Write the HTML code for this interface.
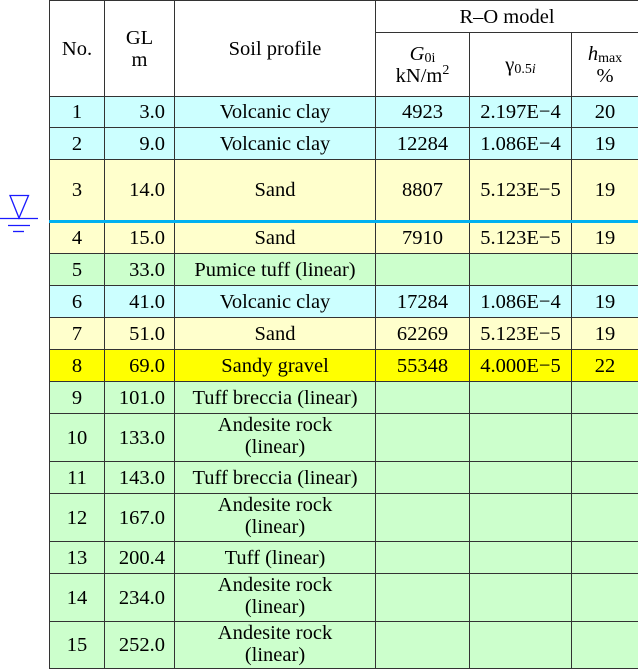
<!DOCTYPE html>
<html><head><meta charset="utf-8"><style>
html,body{margin:0;padding:0;background:#fff;width:638px;height:669px;overflow:hidden}
table{position:absolute;left:49px;top:0;border-collapse:collapse;table-layout:fixed;width:589px;font-family:"Liberation Serif","DejaVu Serif",serif;font-size:20.5px;color:#000}
td{border:1px solid #333;padding:0;text-align:center;vertical-align:middle;line-height:22px;overflow:hidden;white-space:nowrap}
.c{background:#ccffff}.y{background:#ffffcc}.g{background:#ccffcc}.Y{background:#ffff00}
.r{text-align:right;padding-right:9px}
.b td{border-bottom:3px solid #00b0f0}
.t{vertical-align:top;padding-top:0;line-height:22px}
.s{font-size:14px;line-height:0;position:relative;top:2px}
.p{font-size:14px;line-height:0;position:relative;top:-8px}
</style></head><body>
<svg width="45" height="240" style="position:absolute;left:0;top:0" viewBox="0 0 45 240">
<g stroke="#1a1aff" stroke-width="1.3" fill="none">
<path d="M10 195.5 H28.5 L19 218 Z"/>
<path d="M0 218.5 H38"/>
<path d="M8 225.5 H30"/>
<path d="M13 231.5 H24"/>
</g></svg>
<table>
<colgroup><col style="width:55px"><col style="width:70px"><col style="width:201px"><col style="width:94px"><col style="width:102px"><col style="width:67px"></colgroup>
<tr style="height:32px"><td rowspan="2">No.</td><td rowspan="2">GL<br>m</td><td rowspan="2">Soil profile</td><td colspan="3">R–O model</td></tr>
<tr style="height:64px"><td><i>G</i><span class="s">0i</span><br>kN/m<span class="p">2</span></td><td>γ<span class="s">0.5<i>i</i></span></td><td><i>h</i><span class="s">max</span><br>%</td></tr>
<tr class="c" style="height:31px"><td>1</td><td class="r">3.0</td><td>Volcanic clay</td><td>4923</td><td>2.197E−4</td><td>20</td></tr>
<tr class="c" style="height:32px"><td>2</td><td class="r">9.0</td><td>Volcanic clay</td><td>12284</td><td>1.086E−4</td><td>19</td></tr>
<tr class="y b" style="height:62px"><td>3</td><td class="r">14.0</td><td>Sand</td><td>8807</td><td>5.123E−5</td><td>19</td></tr>
<tr class="y" style="height:32px"><td>4</td><td class="r">15.0</td><td>Sand</td><td>7910</td><td>5.123E−5</td><td>19</td></tr>
<tr class="g" style="height:32px"><td>5</td><td class="r">33.0</td><td>Pumice tuff (linear)</td><td></td><td></td><td></td></tr>
<tr class="c" style="height:32px"><td>6</td><td class="r">41.0</td><td>Volcanic clay</td><td>17284</td><td>1.086E−4</td><td>19</td></tr>
<tr class="y" style="height:32px"><td>7</td><td class="r">51.0</td><td>Sand</td><td>62269</td><td>5.123E−5</td><td>19</td></tr>
<tr class="Y" style="height:32px"><td>8</td><td class="r">69.0</td><td>Sandy gravel</td><td>55348</td><td>4.000E−5</td><td>22</td></tr>
<tr class="g" style="height:32px"><td>9</td><td class="r">101.0</td><td>Tuff breccia (linear)</td><td></td><td></td><td></td></tr>
<tr class="g" style="height:48px"><td>10</td><td class="r">133.0</td><td class="t">Andesite rock<br>(linear)</td><td></td><td></td><td></td></tr>
<tr class="g" style="height:32px"><td>11</td><td class="r">143.0</td><td>Tuff breccia (linear)</td><td></td><td></td><td></td></tr>
<tr class="g" style="height:48px"><td>12</td><td class="r">167.0</td><td class="t">Andesite rock<br>(linear)</td><td></td><td></td><td></td></tr>
<tr class="g" style="height:32px"><td>13</td><td class="r">200.4</td><td>Tuff (linear)</td><td></td><td></td><td></td></tr>
<tr class="g" style="height:48px"><td>14</td><td class="r">234.0</td><td class="t">Andesite rock<br>(linear)</td><td></td><td></td><td></td></tr>
<tr class="g" style="height:47px"><td>15</td><td class="r">252.0</td><td class="t">Andesite rock<br>(linear)</td><td></td><td></td><td></td></tr>
</table>
</body></html>
